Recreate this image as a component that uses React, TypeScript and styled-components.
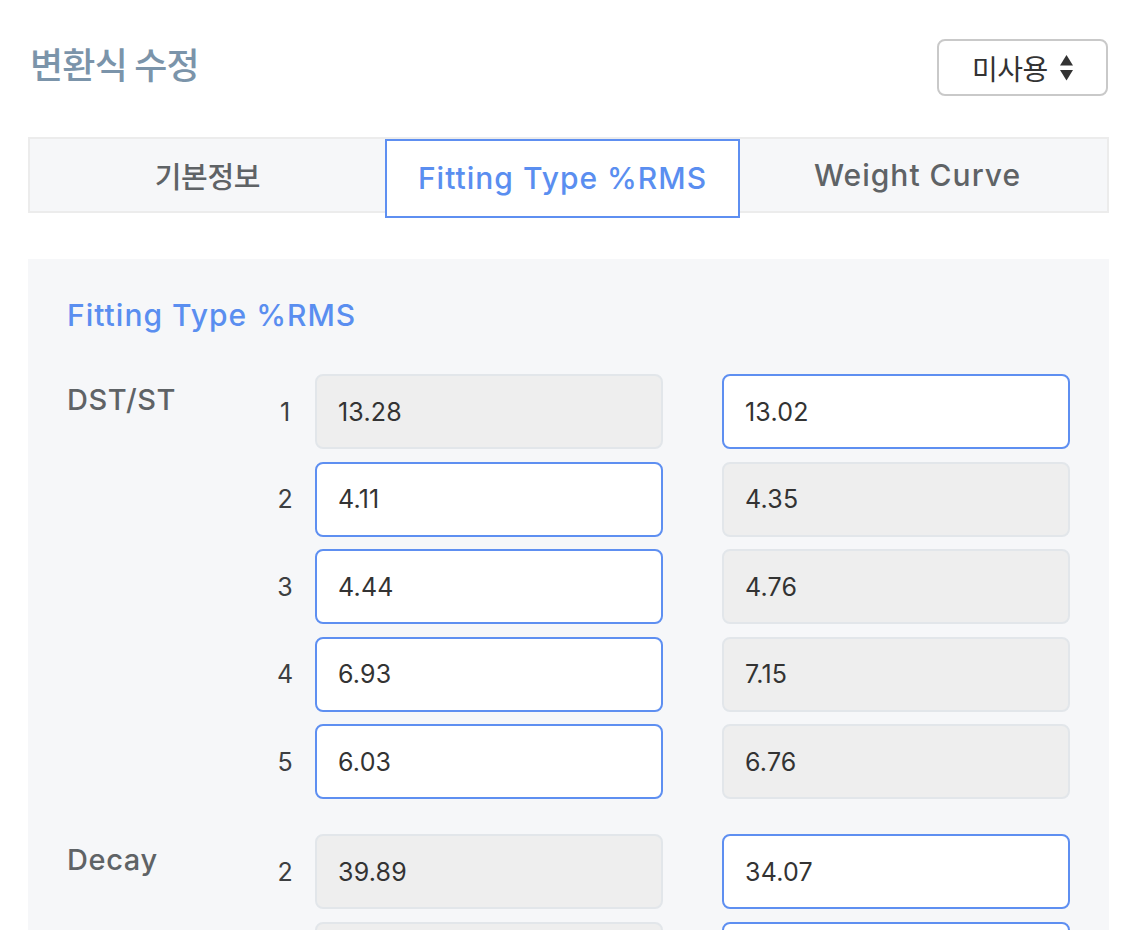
import React from "react";
import styled, { createGlobalStyle } from "styled-components";

const GlobalStyle = createGlobalStyle`
  html, body { margin: 0; padding: 0; background: #ffffff; }
  body {
    font-family: Inter, "Noto Sans", "Noto Sans CJK KR", sans-serif;
    color: #333;
  }
  * { box-sizing: border-box; }
`;

const KR = `"Noto Sans CJK KR", "Noto Sans", sans-serif`;
const LATIN = `Inter, "Noto Sans", "Noto Sans CJK KR", sans-serif`;

const Page = styled.div`
  padding: 39px 21px 0 28px;
`;

const Header = styled.header`
  display: flex;
  justify-content: space-between;
  align-items: flex-start;
  padding-left: 2px;
  padding-right: 1px;
`;

const Title = styled.h1`
  margin: 0;
  margin-top: 0px;
  font-family: ${KR};
  font-size: 36px;
  font-weight: 500;
  line-height: 48px;
  color: #7b94aa;
  letter-spacing: -0.8px;
`;

const SelectButton = styled.button`
  display: flex;
  align-items: center;
  gap: 11px;
  width: 171px;
  height: 57px;
  padding: 0 0 0 33px;
  border: 2px solid #c9c9c9;
  border-radius: 8px;
  background: #ffffff;
  font-family: ${KR};
  font-size: 28px;
  font-weight: 400;
  color: #333;
  cursor: pointer;
  letter-spacing: -0.5px;
`;

const TabBar = styled.nav`
  margin-top: 41px;
  height: 76px;
  border: 2px solid #ececec;
  background: #f6f7f9;
  display: grid;
  grid-template-columns: repeat(3, 355px);
  align-items: start;
`;

const Tab = styled.div<{ $active?: boolean; $kr?: boolean }>`
  height: ${(p) => (p.$active ? "79px" : "72px")};
  display: flex;
  align-items: center;
  justify-content: center;
  padding-bottom: ${(p) => (p.$active ? "2px" : "0")};
  border: ${(p) => (p.$active ? "2px solid #5e8ff1" : "none")};
  background: ${(p) => (p.$active ? "#ffffff" : "transparent")};
  color: ${(p) => (p.$active ? "#5a8ef0" : "#5f6366")};
  font-family: ${(p) => (p.$kr ? KR : LATIN)};
  font-size: ${(p) => (p.$kr ? "29px" : "30px")};
  font-weight: 500;
  letter-spacing: ${(p) => (p.$kr ? "-0.3px" : "1px")};
  position: relative;
  z-index: ${(p) => (p.$active ? 1 : 0)};
`;

const Panel = styled.section`
  margin-top: 46px;
  background: #f6f7f9;
  padding: 36px 39px 40px 39px;
  min-height: 700px;
`;

const PanelTitle = styled.h2`
  margin: 0 0 38px 0;
  font-family: ${LATIN};
  font-size: 30px;
  line-height: 41px;
  font-weight: 500;
  color: #5a8ef0;
  letter-spacing: 1px;
`;

const Group = styled.div`
  display: grid;
  grid-template-columns: 198px 1fr;
  margin-bottom: 35px;
`;

const GroupLabel = styled.div`
  font-family: ${LATIN};
  font-size: 29px;
  line-height: 34px;
  font-weight: 500;
  color: #5f6366;
  padding-top: 9px;
  letter-spacing: 0.6px;
`;

const Rows = styled.div`
  display: flex;
  flex-direction: column;
  gap: 12.5px;
`;

const Row = styled.div`
  display: grid;
  grid-template-columns: 40px 348px 348px;
  column-gap: 10px;
  align-items: center;
  & > :nth-child(3) {
    margin-left: 49px;
  }
`;

const RowNo = styled.div`
  text-align: center;
  font-family: ${LATIN};
  font-size: 25px;
  color: #3d3f41;
`;

const Field = styled.div<{ $editable?: boolean }>`
  height: 75px;
  width: 348px;
  display: flex;
  align-items: center;
  padding: 0 21px;
  border-radius: 8px;
  border: 2px solid ${(p) => (p.$editable ? "#5e8ff1" : "#e2e6ea")};
  background: ${(p) => (p.$editable ? "#ffffff" : "#eeeeee")};
  font-family: ${LATIN};
  font-size: 25px;
  color: #333;
  letter-spacing: 0.2px;
`;

const Arrows = () => (
  <svg width="15" height="28" viewBox="0 0 15 28" aria-hidden="true">
    <path d="M7.5 1 L14 11.5 L1 11.5 Z" fill="#333" />
    <path d="M1 16 L14 16 L7.5 26.5 Z" fill="#333" />
  </svg>
);

type RowData = { no?: number; left: string; right: string; editable: "left" | "right" };

const dst: RowData[] = [
  { no: 1, left: "13.28", right: "13.02", editable: "right" },
  { no: 2, left: "4.11", right: "4.35", editable: "left" },
  { no: 3, left: "4.44", right: "4.76", editable: "left" },
  { no: 4, left: "6.93", right: "7.15", editable: "left" },
  { no: 5, left: "6.03", right: "6.76", editable: "left" },
];

const decay: RowData[] = [
  { no: 2, left: "39.89", right: "34.07", editable: "right" },
  { left: "", right: "", editable: "right" },
];

const FieldGroup = ({ label, rows }: { label: string; rows: RowData[] }) => (
  <Group>
    <GroupLabel>{label}</GroupLabel>
    <Rows>
      {rows.map((r, i) => (
        <Row key={i}>
          <RowNo>{r.no ?? ""}</RowNo>
          <Field $editable={r.editable === "left"}>{r.left}</Field>
          <Field $editable={r.editable === "right"}>{r.right}</Field>
        </Row>
      ))}
    </Rows>
  </Group>
);

export default function App() {
  return (
    <>
      <GlobalStyle />
      <Page>
        <Header>
          <Title>변환식 수정</Title>
          <SelectButton>
            <span>미사용</span>
            <Arrows />
          </SelectButton>
        </Header>
        <TabBar>
          <Tab $kr>기본정보</Tab>
          <Tab $active>Fitting Type %RMS</Tab>
          <Tab>Weight Curve</Tab>
        </TabBar>
        <Panel>
          <PanelTitle>Fitting Type %RMS</PanelTitle>
          <FieldGroup label="DST/ST" rows={dst} />
          <FieldGroup label="Decay" rows={decay} />
        </Panel>
      </Page>
    </>
  );
}
